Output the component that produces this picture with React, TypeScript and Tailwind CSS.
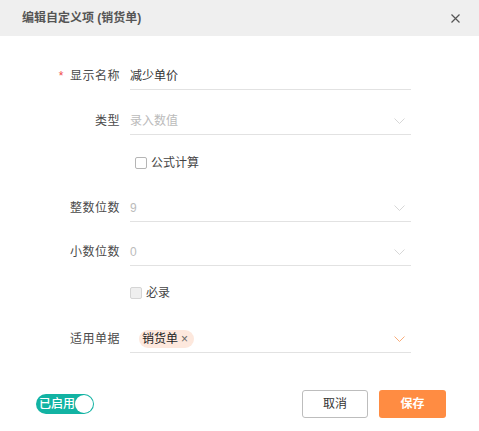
import React, { useState } from 'react';

const Chevron = ({ color = '#d2d2d2' }: { color?: string }) => (
    <svg width="11" height="6" viewBox="0 0 11 6" fill="none">
        <path d="M0.5 0.5 L5.5 5.5 L10.5 0.5" stroke={color} strokeWidth="0.9" />
    </svg>
);

const FieldRow = ({
    label,
    required,
    children,
    className = '',
}: {
    label: string;
    required?: boolean;
    children: React.ReactNode;
    className?: string;
}) => (
    <div className={`flex items-stretch ${className}`}>
        <div className="w-[120px] flex items-center justify-end text-[12px] tracking-[0.5px] text-[#4a4a4a]">
            {required && <span className="text-[#f04b4b] mr-[6px]">*</span>}
            {label}
        </div>
        <div className="ml-[10px] w-[281px] h-[28px] border-b border-[#e2e2e2] flex items-center justify-between pr-[6px]">
            {children}
        </div>
    </div>
);

const App = () => {
    const [enabled, setEnabled] = useState(true);
    const [formula, setFormula] = useState(false);

    return (
        <div
            className="w-[479px] h-[431px] bg-white flex flex-col overflow-hidden"
            style={{ fontFamily: '"Liberation Sans", "Noto Sans CJK SC", sans-serif' }}
        >
            <div className="h-[36px] shrink-0 bg-[#efefef] flex items-center justify-between pl-[22px] pr-[19px]">
                <span className="text-[12px] font-bold text-[#555]">编辑自定义项 (销货单)</span>
                <svg width="9" height="9" viewBox="0 0 9 9">
                    <path d="M0.5 0.5 L8.5 8.5 M8.5 0.5 L0.5 8.5" stroke="#555" strokeWidth="1.2" />
                </svg>
            </div>

            <div className="flex flex-col">
                <FieldRow label="显示名称" required className="mt-[26px]">
                    <span className="text-[12px] text-[#333]">减少单价</span>
                </FieldRow>

                <FieldRow label="类型" className="mt-[17px]">
                    <span className="text-[12px] text-[#bbb]">录入数值</span>
                    <Chevron />
                </FieldRow>

                <div className="mt-[20px] ml-[135px] h-[16px] flex items-center">
                    <button
                        onClick={() => setFormula(!formula)}
                        className="w-[12px] h-[12px] border border-[#b5b5b5] rounded-[2px] bg-white"
                    />
                    <span className="ml-[4px] text-[12px] text-[#444]">公式计算</span>
                </div>

                <FieldRow label="整数位数" className="mt-[23px]">
                    <span className="text-[12px] text-[#bbb]">9</span>
                    <Chevron />
                </FieldRow>

                <FieldRow label="小数位数" className="mt-[16px]">
                    <span className="text-[12px] text-[#bbb]">0</span>
                    <Chevron />
                </FieldRow>

                <div className="mt-[19px] ml-[130px] h-[16px] flex items-center">
                    <span className="w-[12px] h-[12px] border border-[#d5d5d5] rounded-[2px] bg-[#efefef]" />
                    <span className="ml-[4px] text-[12px] text-[#444]">必录</span>
                </div>

                <FieldRow label="适用单据" className="mt-[24px]">
                    <span className="ml-[9px] h-[18px] pl-[3px] pr-[6px] rounded-full bg-[#fde8dd] flex items-center text-[12px] text-[#222]">
                        销货单
                        <span className="ml-[3px] text-[12px] text-[#666]">×</span>
                    </span>
                    <Chevron color="#f7a36b" />
                </FieldRow>
            </div>

            <div className="mt-[37px] flex items-center pl-[36px] pr-[33px]">
                <button
                    onClick={() => setEnabled(!enabled)}
                    className="w-[58px] h-[20px] rounded-full bg-[#12b3a3] flex items-center justify-between pl-[3px] pr-[1px]"
                >
                    <span className="text-[12px] text-white font-medium leading-none">已启用</span>
                    <span className="w-[18px] h-[18px] rounded-full bg-white" />
                </button>
                <div className="ml-auto flex gap-[11px]">
                    <button className="w-[66px] h-[28px] border border-[#bdbdbd] rounded-[3px] bg-white text-[12px] text-[#333]">
                        取消
                    </button>
                    <button className="w-[67px] h-[28px] rounded-[3px] bg-[#ff8c42] text-[12px] font-bold text-white">
                        保存
                    </button>
                </div>
            </div>
        </div>
    );
};

export default App;
